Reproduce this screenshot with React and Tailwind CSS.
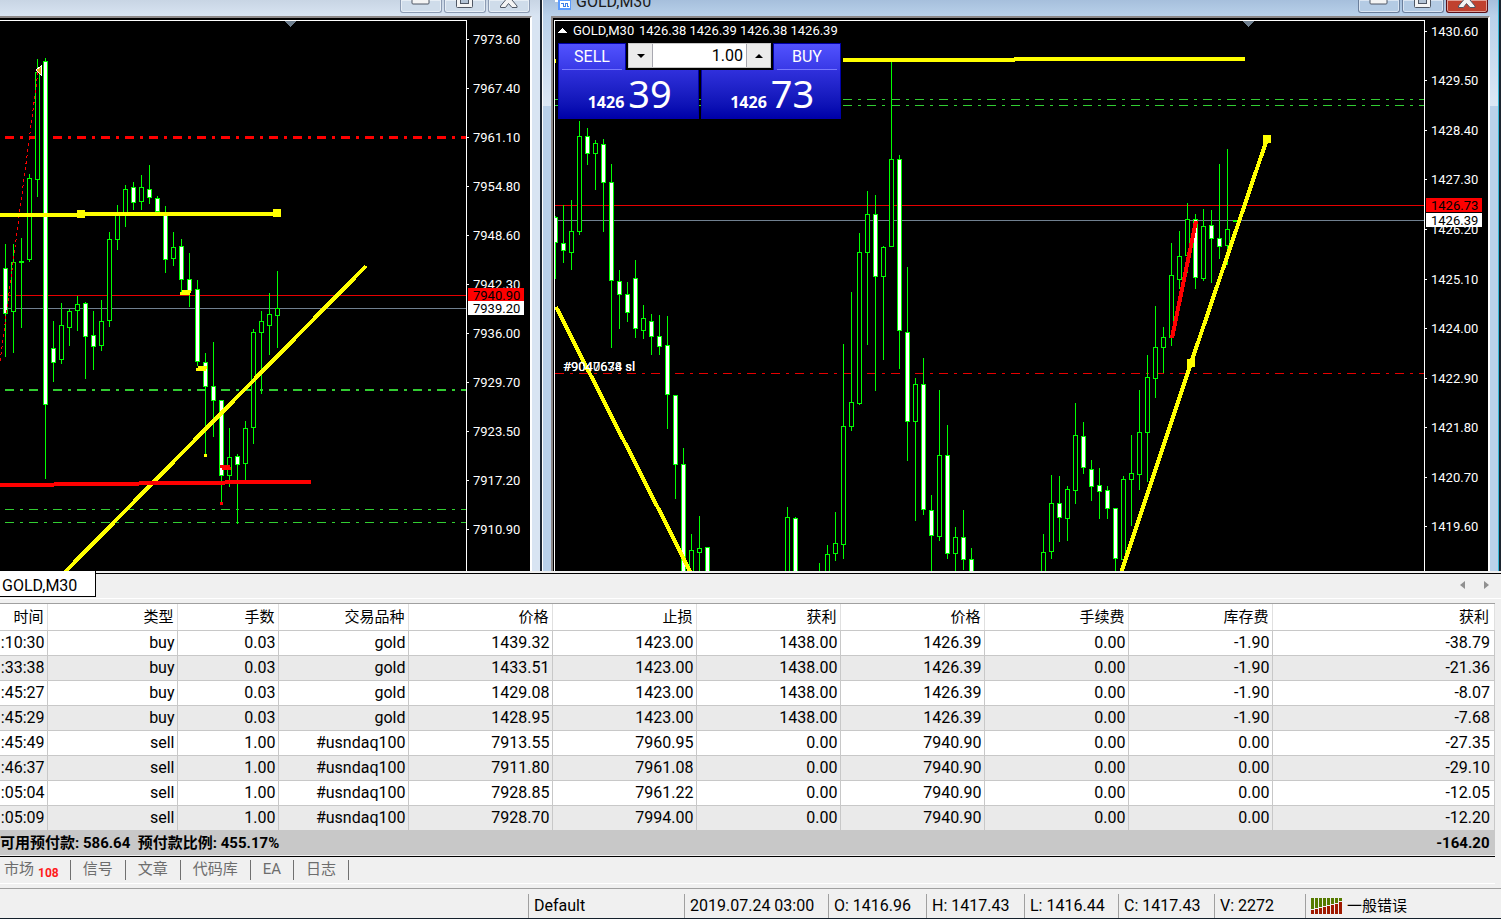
import React, { useState } from "react";
import clsx from "clsx";

// candle: [high, low, bodyTop, bodyBottom, falling]
const nasdaqSeries = [
  {
    start: 5,
    candles: [
      [244, 357, 268, 314, 1],
      [244, 353, 262, 312, 0],
      [238, 328, 261, 263, 0],
      [174, 262, 178, 260, 0],
      [59, 197, 72, 180, 0],
      [58, 479, 61, 405, 1],
      [321, 382, 348, 363, 1],
      [303, 364, 325, 360, 0],
      [309, 346, 311, 328, 0],
      [296, 331, 304, 311, 0],
      [302, 379, 303, 337, 1],
      [311, 370, 335, 347, 1],
      [300, 351, 321, 346, 0],
      [232, 327, 239, 321, 0],
      [205, 250, 213, 240, 0],
      [185, 227, 189, 214, 0],
      [182, 210, 187, 203, 1],
      [175, 210, 187, 202, 0],
      [165, 204, 189, 198, 1],
      [196, 212, 198, 212, 1],
      [206, 273, 214, 260, 1],
      [232, 266, 247, 259, 0],
      [239, 292, 246, 280, 1],
      [253, 307, 279, 291, 1],
      [280, 366, 289, 362, 1],
      [353, 454, 362, 387, 1],
      [342, 437, 386, 401, 1],
      [400, 503, 400, 476, 1],
      [428, 487, 457, 476, 0],
      [454, 524, 456, 465, 1],
      [421, 480, 428, 464, 0],
      [329, 444, 332, 428, 0],
      [311, 394, 321, 333, 0],
      [293, 355, 314, 326, 0],
      [271, 348, 308, 316, 0],
    ],
  },
];

const goldSeries = [
  {
    start: 555,
    candles: [
      [216, 279, 217, 243, 1],
      [205, 263, 243, 251, 1],
      [200, 270, 231, 253, 0],
      [121, 235, 136, 232, 0],
      [128, 165, 136, 154, 1],
      [140, 190, 143, 154, 0],
      [139, 232, 144, 183, 1],
      [164, 348, 182, 281, 1],
      [270, 329, 281, 295, 1],
      [282, 322, 294, 313, 1],
      [260, 338, 278, 329, 1],
      [305, 339, 318, 331, 0],
      [314, 355, 321, 337, 1],
      [315, 355, 336, 347, 1],
      [316, 429, 345, 395, 1],
      [395, 499, 395, 465, 1],
      [448, 650, 464, 650, 1],
      [534, 650, 550, 650, 0],
      [516, 650, 548, 553, 0],
      [547, 650, 547, 650, 1],
    ],
  },
  {
    start: 787,
    candles: [
      [507, 650, 517, 650, 0],
      [517, 650, 518, 650, 1],
    ],
  },
  {
    start: 819,
    candles: [
      [563, 650, 600, 650, 0],
      [545, 650, 554, 650, 0],
      [512, 561, 543, 554, 0],
      [344, 559, 426, 545, 0],
      [292, 431, 402, 427, 0],
      [233, 405, 252, 404, 0],
      [191, 345, 214, 253, 0],
      [195, 391, 214, 277, 1],
      [246, 360, 247, 277, 0],
      [62, 247, 159, 247, 0],
      [155, 369, 159, 331, 1],
      [267, 461, 332, 422, 1],
      [378, 521, 384, 422, 0],
      [358, 515, 384, 510, 1],
      [495, 650, 510, 536, 1],
      [390, 541, 455, 537, 0],
      [425, 559, 455, 554, 1],
      [527, 650, 537, 554, 0],
      [510, 570, 537, 560, 1],
      [548, 650, 559, 650, 1],
    ],
  },
  {
    start: 1043,
    candles: [
      [534, 650, 552, 650, 0],
      [475, 559, 503, 552, 0],
      [476, 542, 503, 518, 1],
      [486, 541, 489, 519, 0],
      [403, 504, 435, 491, 0],
      [422, 474, 436, 468, 1],
      [460, 501, 469, 487, 1],
      [468, 519, 485, 492, 1],
      [486, 519, 490, 509, 1],
      [508, 650, 508, 559, 1],
      [476, 560, 479, 560, 0],
      [435, 526, 473, 480, 0],
      [390, 490, 432, 475, 0],
      [355, 482, 377, 433, 0],
      [306, 398, 347, 379, 0],
      [327, 373, 337, 348, 0],
      [243, 346, 275, 338, 0],
      [231, 289, 256, 280, 0],
      [203, 273, 219, 256, 0],
      [214, 289, 219, 278, 1],
      [209, 281, 226, 279, 0],
      [210, 283, 225, 239, 1],
      [164, 259, 238, 247, 1],
      [149, 265, 229, 246, 0],
      [220, 222, 220, 222, 0],
    ],
  },
];

const nasdaqTicks = [
  [39, "7973.60"],
  [88, "7967.40"],
  [137, "7961.10"],
  [186, "7954.80"],
  [235, "7948.60"],
  [284, "7942.30"],
  [333, "7936.00"],
  [382, "7929.70"],
  [431, "7923.50"],
  [480, "7917.20"],
  [529, "7910.90"],
];

const goldTicks = [
  [31, "1430.60"],
  [80, "1429.50"],
  [130, "1428.40"],
  [179, "1427.30"],
  [229, "1426.20"],
  [279, "1425.10"],
  [328, "1424.00"],
  [378, "1422.90"],
  [427, "1421.80"],
  [477, "1420.70"],
  [526, "1419.60"],
];

const headers = ["时间", "类型", "手数", "交易品种", "价格", "止损", "获利", "价格", "手续费", "库存费", "获利"];

const orders = [
  [":10:30", "buy", "0.03", "gold", "1439.32", "1423.00", "1438.00", "1426.39", "0.00", "-1.90", "-38.79"],
  [":33:38", "buy", "0.03", "gold", "1433.51", "1423.00", "1438.00", "1426.39", "0.00", "-1.90", "-21.36"],
  [":45:27", "buy", "0.03", "gold", "1429.08", "1423.00", "1438.00", "1426.39", "0.00", "-1.90", "-8.07"],
  [":45:29", "buy", "0.03", "gold", "1428.95", "1423.00", "1438.00", "1426.39", "0.00", "-1.90", "-7.68"],
  [":45:49", "sell", "1.00", "#usndaq100", "7913.55", "7960.95", "0.00", "7940.90", "0.00", "0.00", "-27.35"],
  [":46:37", "sell", "1.00", "#usndaq100", "7911.80", "7961.08", "0.00", "7940.90", "0.00", "0.00", "-29.10"],
  [":05:04", "sell", "1.00", "#usndaq100", "7928.85", "7961.22", "0.00", "7940.90", "0.00", "0.00", "-12.05"],
  [":05:09", "sell", "1.00", "#usndaq100", "7928.70", "7994.00", "0.00", "7940.90", "0.00", "0.00", "-12.20"],
];

const Candles = ({ series }) => (
  <>
    {series.map(({ start, candles }) =>
      candles.map(([high, low, top, bottom, falling], i) => {
        const x = start + i * 8;
        return (
          <g key={x}>
            <rect x={x} y={high} width="1" height={low - high} fill="#00ff00" />
            <rect x={x - 2} y={top} width="5" height={bottom - top} fill="#00ff00" />
            {bottom - top > 2 && (
              <rect
                x={x - 1}
                y={top + 1}
                width="3"
                height={bottom - top - 2}
                fill={falling ? "#ffffff" : "#000000"}
              />
            )}
          </g>
        );
      })
    )}
  </>
);

const Level = ({ y, color }) => <rect x="0" y={y} width="3000" height="1" fill={color} />;

const DashLevel = ({ x, y, color, size = 1 }) => (
  <line
    x1={x}
    x2="3000"
    y1={y + size / 2}
    y2={y + size / 2}
    stroke={color}
    strokeWidth={size}
    strokeDasharray="9 6 3 6"
  />
);

const Handle = ({ x, y, color = "#ffff00", size = 8 }) => (
  <rect x={x} y={y} width={size} height={size} fill={color} />
);

const PriceAxis = ({ ticks, ask, bid }) => (
  <svg
    className="w-[63px] shrink-0 font-['Roboto',sans-serif] text-[13px]"
    shapeRendering="crispEdges"
    fill="#ffffff"
  >
    {/* plot starts 20px below the top of the window */}
    <g transform="translate(0 -20)">
      {ticks.map(([y, label]) => (
        <g key={label}>
          <rect x="0" y={y} width="2" height="1" />
          <text x="6" y={y + 5}>{label}</text>
        </g>
      ))}
      <rect x="1" y={ask[0] - 7} width="56" height="14" fill="#ff0000" />
      <text x="6" y={ask[0] + 5} fill="#000000">{ask[1]}</text>
      <rect x="1" y={bid[0] - 7} width="56" height="14" />
      <text x="6" y={bid[0] + 5} fill="#000000">{bid[1]}</text>
    </g>
  </svg>
);

const WindowButtons = ({ active }) => {
  const box = "h-[13px] w-[42px] rounded-b-[3px] border border-t-0 ring-inset ring-1 ring-white/50";
  return (
    <div className="flex gap-[2px]">
      <button
        aria-label="Minimize"
        className={clsx(box, active ? "border-[#6b7f9c] bg-[#b4cbe4]" : "border-[#8c9bb3] bg-[#cfdcea]")}
      >
        <svg width="40" height="12">
          <rect x="11" y="-4" width="17" height="8" rx="1" fill="#f4f4f4" stroke="#4f5764" />
        </svg>
      </button>
      <button
        aria-label="Maximize"
        className={clsx(box, active ? "border-[#6b7f9c] bg-[#b4cbe4]" : "border-[#8c9bb3] bg-[#cfdcea]")}
      >
        <svg width="40" height="12">
          <rect x="11.500" y="-6" width="16" height="13.500" rx="1" fill="#f4f4f4" stroke="#4f5764" />
          <rect x="15.500" y="-3" width="8" height="6.500" fill="#b4c4d6" stroke="#4f5764" />
        </svg>
      </button>
      <button
        aria-label="Close"
        className={clsx(box, active ? "border-[#5b1018] bg-[#c0412f]" : "border-[#8c9bb3] bg-[#cfdcea]")}
      >
        <svg width="40" height="12">
          <path
            d="M11.500 7.500V6L16.500 0L13 -4H27L23 0L28 6V7.500H23L19.500 3.500L16.500 7.500Z"
            fill="#f4f4f4"
            stroke="#4f5764"
          />
        </svg>
      </button>
    </div>
  );
};

const OneClickPanel = () => {
  const [volume, setVolume] = useState("1.00");
  const change = (step) => setVolume((v) => Math.max(0.01, Number(v) + step).toFixed(2));

  return (
    <div className="absolute top-[22px] left-[3px] flex w-[283px] flex-col text-white">
      <div className="flex h-[27px] items-start justify-between">
        <button className="h-full w-[68px] border border-b-0 border-[#0000a8] bg-linear-to-b from-[#5252ff] to-[#3838e6] px-[3px]">
          <span className="block h-[26px] border-b border-[#7878ff] text-[16px] leading-[26px]">SELL</span>
        </button>
        <div className="flex h-[25px] w-[143px] border border-[#c8c8c8] bg-white">
          <button
            aria-label="Decrease volume"
            onClick={() => change(-0.01)}
            className="flex w-6 items-center justify-center border-r border-[#a8a8b0] bg-[#ececec]"
          >
            <svg width="8" height="4"><path d="M0 0H8L4 4Z" fill="#000" /></svg>
          </button>
          <input
            aria-label="Volume"
            value={volume}
            onChange={(e) => setVolume(e.target.value)}
            className="w-0 min-w-0 flex-1 px-[3px] text-right text-[16px] leading-6 text-black outline-none"
          />
          <button
            aria-label="Increase volume"
            onClick={() => change(0.01)}
            className="flex w-6 items-center justify-center border-l border-[#a8a8b0] bg-[#ececec]"
          >
            <svg width="8" height="4"><path d="M0 4H8L4 0Z" fill="#000" /></svg>
          </button>
        </div>
        <button className="h-full w-[68px] border border-b-0 border-[#0000a8] bg-linear-to-b from-[#5252ff] to-[#3838e6] px-[3px]">
          <span className="block h-[26px] border-b border-[#7878ff] text-[16px] leading-[26px]">BUY</span>
        </button>
      </div>
      <div className="flex h-[49px] gap-[2px]">
        {["39", "73"].map((points) => (
          <button
            key={points}
            className="flex flex-1 items-baseline justify-center gap-1 border border-t-0 border-[#0000a8] bg-linear-to-b from-[#3030dc] to-[#0000a8] pl-[3px] font-['Noto_Sans',sans-serif]"
          >
            <span className="text-[16px] font-bold">1426</span>
            <span className="text-[38px] leading-[46px]">{points}</span>
          </button>
        ))}
      </div>
    </div>
  );
};

const NasdaqWindow = () => (
  <section className="flex w-[540px] shrink-0 flex-col bg-[#d8e4f2]">
    <div className="flex h-4 justify-end bg-linear-to-b from-[#c8d5e4] to-[#d8e4f2] pr-[10px]">
      <WindowButtons />
    </div>
    <div className="mr-2 flex flex-1 flex-col border-t-2 border-r-2 border-t-[#8c8888] border-r-white bg-black pt-[2px]">
      <div className="flex flex-1">
        <svg
          className="min-h-[400px] min-w-0 flex-1 border-t border-r border-white"
          shapeRendering="crispEdges"
        >
          <g transform="translate(0 -21)">
            <path d="M285 21H296L290 27Z" fill="#708090" />
            <DashLevel x={5} y={136} color="#ff0000" size={3} />
            <DashLevel x={5} y={389} color="#32cd32" size={2} />
            <DashLevel x={5} y={509} color="#32cd32" />
            <DashLevel x={5} y={522} color="#32cd32" />
            <Level y={295} color="#e60000" />
            <Level y={308} color="#708090" />
            <Candles series={nasdaqSeries} />

            <path d="M38 72L0 362" stroke="#ff0000" strokeDasharray="3 3" fill="none" />
            <path d="M36 70L41 66V75Z" fill="#daa520" stroke="#ffffff" />

            <path d="M0 215H80M80 214H277" stroke="#ffff00" strokeWidth="4" />
            <Handle x={77} y={210} />
            <Handle x={273} y={209} />
            <path d="M65 572L366 266" stroke="#ffff00" strokeWidth="4" />
            <path d="M0 485H54M54 484H139M139 483H225M225 482H311" stroke="#ff0000" strokeWidth="4" />

            <path d="M180 293H190M182 291H191M196 369H206M198 367H207" stroke="#ffff00" strokeWidth="3" />
            <path d="M220 466H230M222 468H231" stroke="#ff0000" strokeWidth="3" />
            <Handle x={204} y={454} size={3} />
            <Handle x={220} y={502} size={3} color="#ff0000" />
          </g>
        </svg>
        <PriceAxis ticks={nasdaqTicks} ask={[295, "7940.90"]} bid={[308, "7939.20"]} />
      </div>
    </div>
  </section>
);

const GoldWindow = () => (
  <section className="flex min-w-0 flex-1 flex-col border-r border-l border-r-[#35b8d8] border-l-white bg-[#b9d1ea]">
    <div className="flex h-4 items-start justify-between overflow-hidden bg-linear-to-b from-[#a6bfdc] to-[#b9d1ea] pr-[10px] pl-3">
      <h2 className="flex gap-[5px] text-[16px] leading-[4px] text-[#1a1a1a]">
        <svg width="16" height="10" shapeRendering="crispEdges">
          <rect x="0" y="0" width="4" height="2" fill="#fff" />
          <rect x="3" y="0" width="13" height="10" fill="#5a9bff" />
          <rect x="5" y="1" width="10" height="7" fill="#fff" />
          <path d="M6 3h2v3h2V3h2v3h2" stroke="#3f7fe8" fill="none" />
        </svg>
        GOLD,M30
      </h2>
      <WindowButtons active />
    </div>
    <div className="flex flex-1 bg-[linear-gradient(#b9d1ea,#dce8f5_90px,#b9d1ea_90px)]">
      <div className="mr-2 ml-2 flex flex-1 flex-col border-t-2 border-r-2 border-l-2 border-t-[#8c8888] border-r-white border-l-[#8c8888] bg-black pt-[2px] pl-px">
        <div className="flex flex-1">
          <div className="relative flex min-w-0 flex-1 border-t border-r border-l border-white">
            <svg
              className="min-h-[400px] min-w-0 flex-1 font-['Roboto',sans-serif] text-[13px]"
              shapeRendering="crispEdges"
            >
              <g transform="translate(-555 -21)">
                <path d="M1243 21H1254L1248 27Z" fill="#708090" />
                <DashLevel x={555} y={99} color="#32cd32" />
                <DashLevel x={555} y={105} color="#32cd32" />
                <DashLevel x={555} y={373} color="#e60000" />
                <Level y={205} color="#e60000" />
                <Level y={220} color="#708090" />
                <Candles series={goldSeries} />

                <path d="M555 61H556M843 60H1015M1014 59H1245" stroke="#ffff00" strokeWidth="4" />
                <path d="M556 307L691 573M1121 573L1191 363L1267 139" stroke="#ffff00" strokeWidth="4" fill="none" />
                <Handle x={1263} y={135} />
                <Handle x={1187} y={359} />
                <path d="M1196 221L1172 338" stroke="#ff0000" strokeWidth="4" />

                <text x="563" y="371" fill="#fff">#9040634 sl</text>
                <text x="563" y="371" fill="#fff">#9047678 sl</text>
                <path d="M558 33H567L562 28Z" fill="#fff" />
                <text x="573" y="35" fill="#fff">GOLD,M30</text>
                <text x="639" y="35" fill="#fff">1426.38 1426.39 1426.38 1426.39</text>
              </g>
            </svg>
            <OneClickPanel />
          </div>
          <PriceAxis ticks={goldTicks} ask={[205, "1426.73"]} bid={[220, "1426.39"]} />
        </div>
      </div>
    </div>
  </section>
);

const OrdersTable = () => (
  <table className="w-full table-fixed border-collapse bg-white text-right text-[16px] whitespace-nowrap">
    <colgroup>
      <col className="w-[47px]" />
      <col className="w-[130px]" />
      <col className="w-[101px]" />
      <col className="w-[130px]" />
      <col className="w-36" />
      <col className="w-36" />
      <col className="w-36" />
      <col className="w-36" />
      <col className="w-36" />
      <col className="w-36" />
      <col />
    </colgroup>
    <thead>
      <tr className="h-[26px]">
        {headers.map((title, i) => (
          <th
            key={i}
            scope="col"
            className="border-r border-b border-r-[#e0e0e0] border-b-[#c8c8c8] p-0 pr-[3px] text-[15px] leading-5 font-normal last:pr-[5px]"
          >
            {title}
          </th>
        ))}
      </tr>
    </thead>
    <tbody>
      {orders.map((order) => (
        <tr key={order[0]} className="h-[25px] even:bg-[#eaeaea]">
          {order.map((value, i) => (
            <td key={i} className="border-r border-b border-[#c8c8c8] p-0 pr-[2px] leading-6 last:pr-1">
              {value}
            </td>
          ))}
        </tr>
      ))}
    </tbody>
    <tfoot>
      <tr className="h-[25px] bg-[#c8c8c8] text-[15px] font-bold">
        <td colSpan={10} className="p-0 text-left leading-6 whitespace-pre">
          可用预付款: 586.64{"  "}预付款比例: 455.17%
        </td>
        <td className="p-0 pr-[5px] leading-6">-164.20</td>
      </tr>
    </tfoot>
  </table>
);

const terminalTabs = ["信号", "文章", "代码库", "EA", "日志"];

const StatusCell = ({ className, children }) => (
  <div className={clsx("flex h-6 shrink-0 items-center border-l border-[#a0a0a0] pl-[5px]", className)}>
    {children}
  </div>
);

const SignalIcon = () => (
  <svg width="32" height="16" shapeRendering="crispEdges">
    {[4, 5, 6, 7, 8, 9, 10, 12].map((h, i) => (
      <g key={i}>
        <rect x={i * 4} y="0" width="3" height={15 - h} fill="#557a00" />
        <rect x={i * 4} y={16 - h} width="3" height={h} fill="#a01a00" />
      </g>
    ))}
  </svg>
);

const App = () => {
  return (
    <div className="flex min-h-screen flex-col overflow-x-hidden bg-[#f0f0f0] font-['Roboto','Noto_Sans_CJK_SC',sans-serif] text-black">
      <main className="flex flex-1 bg-[#1c2530]">
        <NasdaqWindow />
        <div className="w-[2px] shrink-0" />
        <GoldWindow />
        <div className="w-[2px] shrink-0" />
      </main>

      {/* chart tabs */}
      <div className="flex h-7 items-start justify-between border-b border-white bg-[#f0f0f0]">
        <button className="h-[26px] w-24 border-r border-b border-black bg-white pt-px pl-[2px] text-left text-[16px] leading-7">
          GOLD,M30
        </button>
        <div className="mt-[2px] flex h-[23px] flex-1 items-center justify-end gap-[19px] border-t border-black pr-3">
          <button aria-label="Scroll left">
            <svg width="5" height="8"><path d="M5 0V8L0 4Z" fill="#909090" /></svg>
          </button>
          <button aria-label="Scroll right">
            <svg width="5" height="8"><path d="M0 0V8L5 4Z" fill="#909090" /></svg>
          </button>
        </div>
      </div>

      {/* terminal */}
      <div className="mt-1 mr-[6px] border-t border-[#a0a0a0]">
        <OrdersTable />
      </div>
      <div className="mt-px mr-[6px] flex h-7 items-start border-t border-b border-t-black border-b-white pt-[3px] text-[15px] leading-[18px] text-[#6d6d6d]">
        <button className="flex h-5 border-r border-[#707070] pr-[11px] pb-[2px] pl-1">
          市场
          <span className="pt-1 pl-1 text-[12px] font-bold text-[#ff1a1a]">108</span>
        </button>
        {terminalTabs.map((tab) => (
          <button key={tab} className="h-5 border-r border-[#707070] px-3 pb-[2px]">
            {tab}
          </button>
        ))}
      </div>

      <footer className="mt-1 flex h-[31px] items-end overflow-hidden border-t border-b border-t-[#a0a0a0] border-b-[#14202c] pt-1 text-[16px] whitespace-nowrap">
        <div className="flex-1" />
        <StatusCell className="w-[156px]">Default</StatusCell>
        <StatusCell className="w-36">2019.07.24 03:00</StatusCell>
        <StatusCell className="w-[98px]">O: 1416.96</StatusCell>
        <StatusCell className="w-[98px]">H: 1417.43</StatusCell>
        <StatusCell className="w-[94px]">L: 1416.44</StatusCell>
        <StatusCell className="w-24">C: 1417.43</StatusCell>
        <StatusCell className="w-[91px]">V: 2272</StatusCell>
        <StatusCell className="w-[196px] gap-1">
          <SignalIcon />
          <span className="text-[15px]">一般错误</span>
        </StatusCell>
      </footer>
    </div>
  );
};

export default App;
